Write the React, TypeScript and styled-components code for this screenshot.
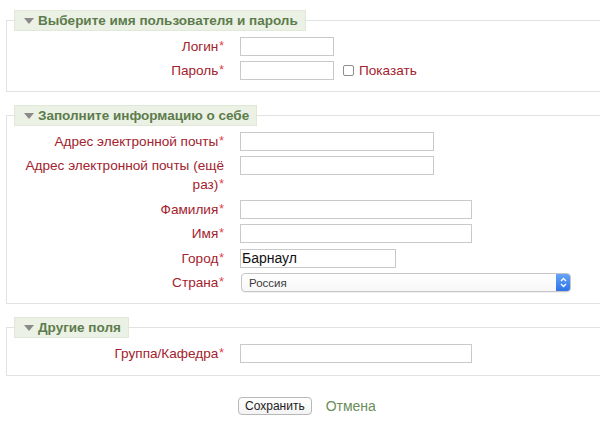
import React from "react";
import styled, { createGlobalStyle } from "styled-components";

const Global = createGlobalStyle`
  html, body { margin: 0; padding: 0; background: #fff; overflow: hidden; }
  body { font-family: "Liberation Sans", Arial, Helvetica, sans-serif; }
`;

const Page = styled.div`
  padding: 10px 0 0 6px;
  width: 600px;
  box-sizing: border-box;
`;

const Fieldset = styled.fieldset<{ $last?: boolean }>`
  margin: 0 -30px ${(p) => (p.$last ? "21px" : "13px")} 0;
  padding: 0 0 ${(p) => (p.$last ? "12px" : "11px")} 11px;
  border: 1px solid #e2e2e2;
  min-width: 0;
`;

const Legend = styled.legend`
  margin-left: -4px;
  box-sizing: border-box;
  height: 21px;
  padding: 0 7px 0 9px;
  background: #ebf1e5;
  border: 1px solid #e0e8d8;
  color: #5d7c4c;
  font-weight: bold;
  font-size: 13.5px;
  line-height: 19px;
  white-space: nowrap;
`;

const Tri = styled.svg`
  width: 10px;
  height: 7px;
  margin-right: 4px;
  vertical-align: 0px;
`;

const Row = styled.div`
  display: grid;
  grid-template-columns: 206px auto;
  column-gap: 16px;
  align-items: start;
  margin-top: 5.5px;
`;

const Label = styled.label`
  text-align: right;
  color: #a3222d;
  font-size: 13.6px;
  line-height: 19px;
`;

const Req = styled.span`
  color: #e0393c;
  font-size: 12px;
  line-height: 1;
  margin-left: 1px;
  position: relative;
  top: -1px;
`;

const Input = styled.div<{ $w: number }>`
  box-sizing: border-box;
  width: ${(p) => p.$w}px;
  height: 19px;
  border: 1px solid #c9c9c9;
  background: #fff;
  font-size: 14px;
  line-height: 17px;
  color: #111;
  padding-left: 1px;
`;

const Inline = styled.div`
  display: flex;
  align-items: center;
  height: 19px;
`;

const Check = styled.span`
  box-sizing: border-box;
  width: 11px;
  height: 11px;
  margin-left: 9px;
  margin-right: 5px;
  border: 1px solid #8e8e8e;
  border-radius: 2px;
  background: #fff;
`;

const CheckText = styled.span`
  color: #a3222d;
  font-size: 13.6px;
  line-height: 19px;
`;

const Select = styled.div`
  box-sizing: border-box;
  margin-left: 1px;
  width: 330px;
  height: 19px;
  border: 1px solid #c6c6c6;
  border-radius: 4px;
  background: linear-gradient(#fff, #f7f7f7);
  box-shadow: 0 1px 1px rgba(0, 0, 0, 0.06);
  display: flex;
  align-items: center;
  justify-content: space-between;
  overflow: hidden;
`;

const SelectText = styled.span`
  padding-left: 7px;
  font-size: 11.5px;
  color: #3a3a3a;
`;

const SelectArrow = styled.span`
  width: 15px;
  height: 19px;
  margin-right: -1px;
  background: linear-gradient(#6aa6f8, #2b71e6);
  border-radius: 0 4px 4px 0;
  display: flex;
  align-items: center;
  justify-content: center;
`;

const Buttons = styled.div`
  display: flex;
  align-items: center;
  padding-left: 232px;
`;

const Button = styled.button`
  box-sizing: border-box;
  height: 18px;
  padding: 0 6px;
  border: 1px solid #b8b8b8;
  border-radius: 4px;
  background: linear-gradient(#fff, #f3f3f3);
  font-family: "Liberation Sans", Arial, sans-serif;
  font-size: 12px;
  color: #222;
  line-height: 16px;
`;

const Cancel = styled.a`
  margin-left: 14px;
  color: #6a8e58;
  font-size: 14px;
  text-decoration: none;
`;

const Triangle = () => (
  <Tri viewBox="0 0 10 7">
    <path d="M0 0 L10 0 L5 6 Z" fill="#8a8a8a" />
  </Tri>
);

const Field = ({ label, children }: { label: React.ReactNode; children: React.ReactNode }) => (
  <Row>
    <Label>
      {label}
      <Req>*</Req>
    </Label>
    {children}
  </Row>
);

export default function App() {
  return (
    <Page>
      <Global />
      <Fieldset>
        <Legend>
          <Triangle />
          Выберите имя пользователя и пароль
        </Legend>
        <Field label="Логин">
          <Input $w={94} />
        </Field>
        <Field label="Пароль">
          <Inline>
            <Input $w={94} />
            <Check />
            <CheckText>Показать</CheckText>
          </Inline>
        </Field>
      </Fieldset>

      <Fieldset>
        <Legend>
          <Triangle />
          Заполните информацию о себе
        </Legend>
        <Field label="Адрес электронной почты">
          <Input $w={194} />
        </Field>
        <Field label="Адрес электронной почты (ещё раз)">
          <Input $w={194} />
        </Field>
        <Field label="Фамилия">
          <Input $w={232} />
        </Field>
        <Field label="Имя">
          <Input $w={232} />
        </Field>
        <Field label="Город">
          <Input $w={156}>Барнаул</Input>
        </Field>
        <Field label="Страна">
          <Select>
            <SelectText>Россия</SelectText>
            <SelectArrow>
              <svg width="7" height="11" viewBox="0 0 7 11">
                <path d="M1 4 L3.5 1.5 L6 4 M1 7 L3.5 9.5 L6 7" fill="none" stroke="#fff" strokeWidth="1.3" />
              </svg>
            </SelectArrow>
          </Select>
        </Field>
      </Fieldset>

      <Fieldset $last>
        <Legend>
          <Triangle />
          Другие поля
        </Legend>
        <Field label="Группа/Кафедра">
          <Input $w={232} />
        </Field>
      </Fieldset>

      <Buttons>
        <Button>Сохранить</Button>
        <Cancel href="#">Отмена</Cancel>
      </Buttons>
    </Page>
  );
}
